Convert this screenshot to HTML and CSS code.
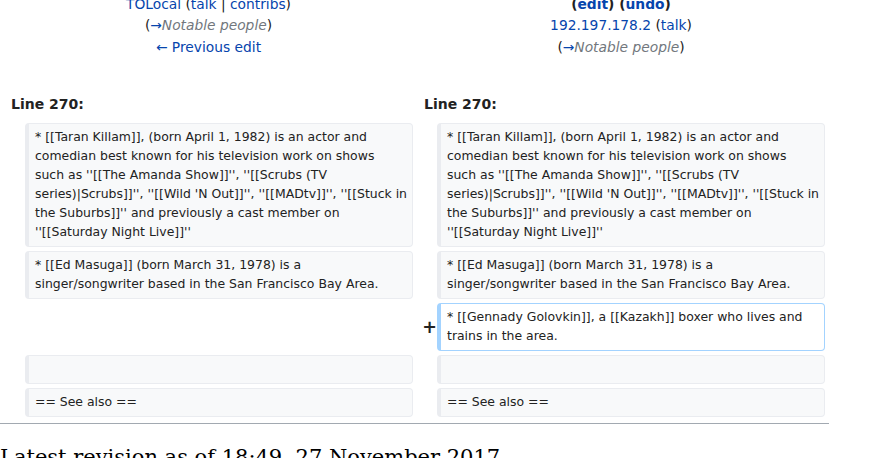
FILE: index.html
```html
<!DOCTYPE html>
<html lang="en">
<head>
<meta charset="utf-8">
<title>Diff</title>
<link rel="stylesheet" href="styles.css">
</head>
<body>
<div class="page">
  <table class="diff">
    <colgroup>
      <col class="col-marker-l">
      <col class="col-content">
      <col class="col-marker-r">
      <col class="col-content">
    </colgroup>
    <tr>
      <td colspan="2" class="title">
        <div><strong><a class="link">Revision as of 13:19, 24 November 2017</a> (<a class="link">edit</a>)</strong></div>
        <div><a class="link">TOLocal</a> (<a class="link">talk</a> | <a class="link">contribs</a>)</div>
        <div class="summary">(<a class="link">→</a><span class="autocomment">Notable people</span>)</div>
        <div><a class="link">← Previous edit</a></div>
      </td>
      <td colspan="2" class="title">
        <div><strong><a class="link">Latest revision as of 18:49, 27 November 2017</a></strong></div>
        <div><strong>(<a class="link">edit</a>) (<a class="link">undo</a>)</strong></div>
        <div><a class="link">192.197.178.2</a> (<a class="link">talk</a>)</div>
        <div class="summary">(<a class="link">→</a><span class="autocomment">Notable people</span>)</div>
      </td>
    </tr>
    <tr>
      <td colspan="2" class="lineno">Line 270:</td>
      <td colspan="2" class="lineno">Line 270:</td>
    </tr>
    <tr>
      <td class="marker"></td>
      <td class="line context">* [[Taran Killam]], (born April 1, 1982) is an actor and
comedian best known for his television work on shows
such as ''[[The Amanda Show]]'', ''[[Scrubs (TV
series)|Scrubs]]'', ''[[Wild 'N Out]]'', ''[[MADtv]]'', ''[[Stuck in
the Suburbs]]'' and previously a cast member on
''[[Saturday Night Live]]''</td>
      <td class="marker"></td>
      <td class="line context">* [[Taran Killam]], (born April 1, 1982) is an actor and
comedian best known for his television work on shows
such as ''[[The Amanda Show]]'', ''[[Scrubs (TV
series)|Scrubs]]'', ''[[Wild 'N Out]]'', ''[[MADtv]]'', ''[[Stuck in
the Suburbs]]'' and previously a cast member on
''[[Saturday Night Live]]''</td>
    </tr>
    <tr>
      <td class="marker"></td>
      <td class="line context">* [[Ed Masuga]] (born March 31, 1978) is a
singer/songwriter based in the San Francisco Bay Area.</td>
      <td class="marker"></td>
      <td class="line context">* [[Ed Masuga]] (born March 31, 1978) is a
singer/songwriter based in the San Francisco Bay Area.</td>
    </tr>
    <tr>
      <td colspan="2" class="empty"></td>
      <td class="marker"><span class="sign">+</span></td>
      <td class="line added">* [[Gennady Golovkin]], a [[Kazakh]] boxer who lives and
trains in the area.</td>
    </tr>
    <tr>
      <td class="marker"></td>
      <td class="line context"><br></td>
      <td class="marker"></td>
      <td class="line context"><br></td>
    </tr>
    <tr>
      <td class="marker"></td>
      <td class="line context">== See also ==</td>
      <td class="marker"></td>
      <td class="line context">== See also ==</td>
    </tr>
  </table>
  <hr class="diff-hr">
  <h2 class="current-title">Latest revision as of 18:49, 27 November 2017</h2>
</div>
</body>
</html>
```

FILE: styles.css
```css
html, body {
  overflow: hidden;
}

body {
  margin: 0;
  background: #ffffff;
  color: #222222;
  font-family: "DejaVu Sans", sans-serif;
}

.page {
  width: 829px;
  margin-top: -36px;
}

.diff {
  width: 829px;
  table-layout: fixed;
  border-collapse: separate;
  border-spacing: 4px;
}

.col-marker-l { width: 17px; }
.col-marker-r { width: 16px; }
.col-content { width: 388px; }

.title {
  text-align: center;
  vertical-align: top;
  padding: 4px 7px;
  font-size: 13.8px;
  line-height: 21.5px;
  white-space: nowrap;
  overflow: hidden;
}

.link {
  color: #0645ad;
  text-decoration: none;
}

.autocomment {
  color: #72777d;
  font-style: italic;
}

.lineno {
  padding: 28px 7px 5px;
  font-size: 14px;
  font-weight: bold;
  line-height: 20px;
  text-align: left;
}

.marker {
  padding: 0;
  text-align: right;
  vertical-align: middle;
  font-weight: bold;
  font-size: 17.5px;
  line-height: 1.2;
}

.sign {
  display: inline-block;
  margin-right: -4px;
}

.line {
  vertical-align: top;
  padding: 3px 2px 5px 6px;
  font-size: 12.44px;
  line-height: 19px;
  white-space: pre-wrap;
  word-wrap: break-word;
  border-style: solid;
  border-width: 1px 1px 1px 4px;
  border-radius: 4px;
  color: #222222;
}

.context {
  background: #f8f9fa;
  border-color: #eaecf0;
}

.added {
  background: #ffffff;
  border-color: #a3d3ff;
}

.empty {
  padding: 0;
}

.diff-hr {
  margin: 2px 0 0;
  height: 0;
  border: 0;
  border-top: 1px solid #a2a9b1;
}

.current-title {
  margin: 20px 0 0;
  font-family: "DejaVu Serif", serif;
  font-weight: normal;
  font-size: 21px;
  line-height: 1.3;
  color: #000000;
  white-space: nowrap;
}
```
